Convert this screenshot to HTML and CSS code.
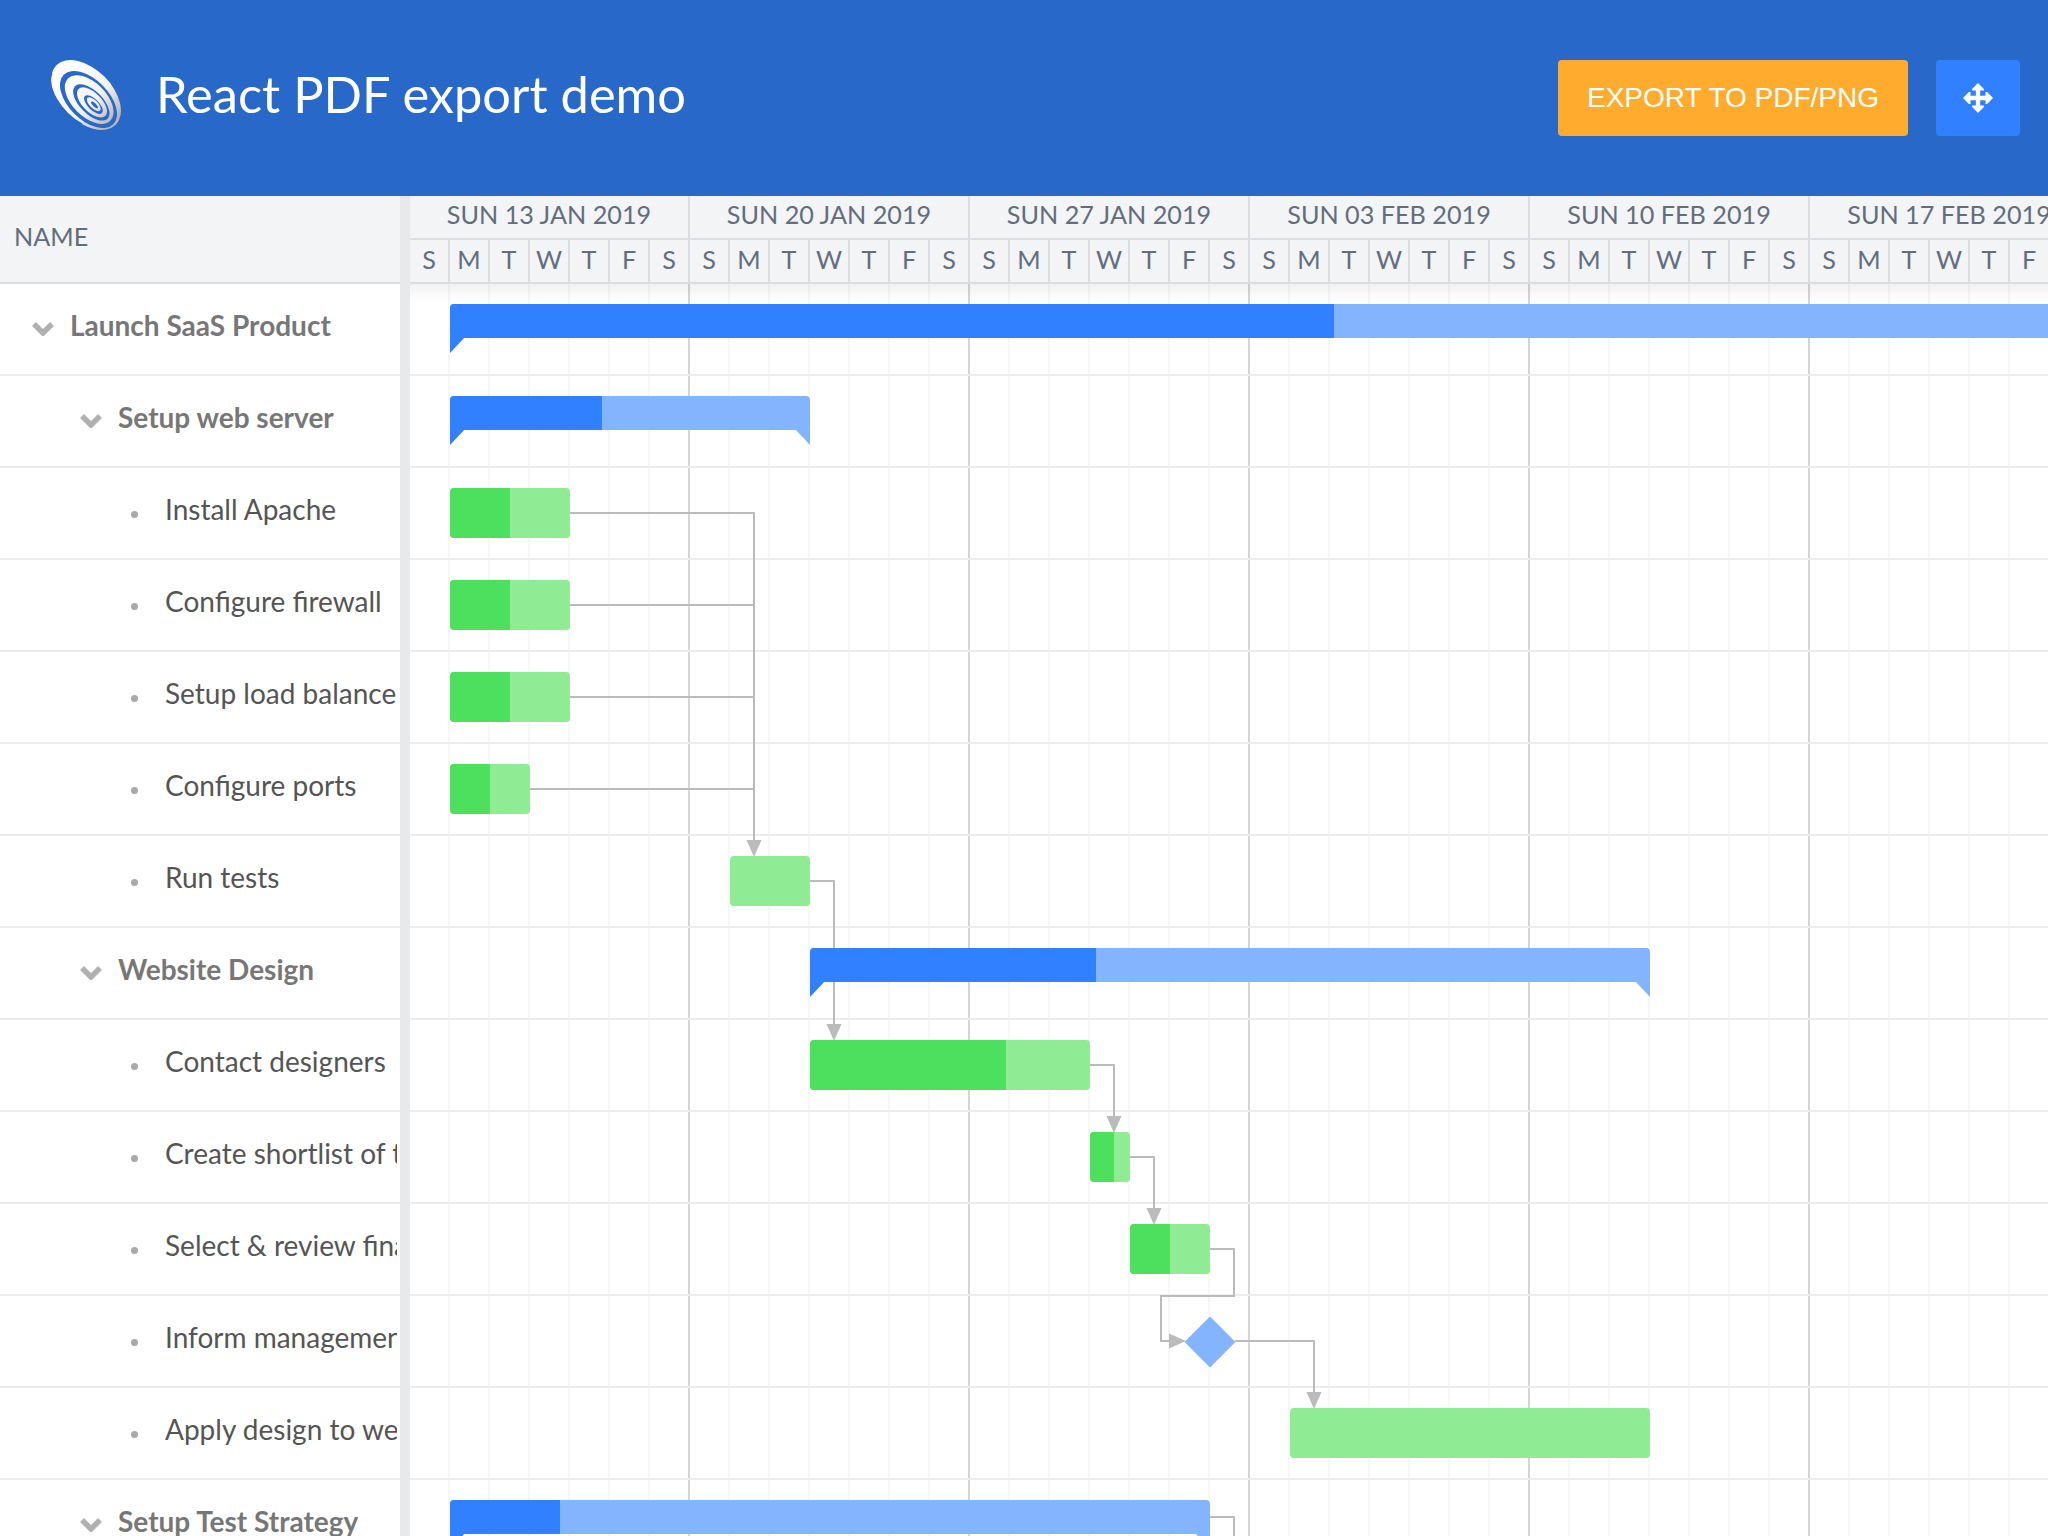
FILE: index.html
```html
<!DOCTYPE html>
<html lang="en">
<head>
    <meta charset="UTF-8">
    <title>React PDF export demo</title>
    <link rel="stylesheet" href="styles.css">
</head>
<body>
    <header class="topbar">
        <svg class="logo" viewBox="-36 -35 72 70">
            <defs>
                <linearGradient id="logoFill" gradientUnits="userSpaceOnUse" x1="-30" y1="0" x2="36" y2="0">
                    <stop offset="0" stop-color="#ffffff"/>
                    <stop offset="0.6" stop-color="#f2f2f2"/>
                    <stop offset="1" stop-color="#b8b8b8"/>
                </linearGradient>
            </defs>
            <g transform="rotate(45)">
                <ellipse cx="0" cy="0" rx="42" ry="26" fill="url(#logoFill)"/>
                <ellipse cx="5" cy="1.5" rx="35" ry="20" fill="#2868c8"/>
                <ellipse cx="5.5" cy="1" rx="30" ry="17" fill="url(#logoFill)"/>
                <ellipse cx="9" cy="1.5" rx="23" ry="11.5" fill="#2868c8"/>
                <ellipse cx="9.5" cy="1" rx="19" ry="9.5" fill="url(#logoFill)"/>
                <ellipse cx="12" cy="1.5" rx="12" ry="5.5" fill="#2868c8"/>
                <ellipse cx="12" cy="1" rx="9" ry="4" fill="url(#logoFill)"/>
                <ellipse cx="13" cy="1" rx="4.5" ry="1.6" fill="#2868c8"/>
                <path d="M-40 9A40 22 0 0 0 18 24" fill="none" stroke="#2868c8" stroke-width="2.5"/>
            </g>
        </svg>
        <h1 class="title">React PDF export demo</h1>
        <button class="export-button">EXPORT TO PDF/PNG</button>
        <button class="move-button">
            <svg viewBox="0 0 28 28" class="move-icon">
                <path d="M14 0l5.5 5.5v1.5h-3.5v5h5v-3.5h1.5l5.5 5.5-5.5 5.5h-1.5v-3.5h-5v5h3.5v1.5l-5.5 5.5-5.5-5.5v-1.5h3.5v-5h-5v3.5h-1.5l-5.5-5.5 5.5-5.5h1.5v3.5h5v-5h-3.5v-1.5z"/>
            </svg>
        </button>
    </header>

    <div class="gantt">
        <div class="names">
            <div class="names-head">NAME</div>
            <div class="name-row level-0"><svg class="chevron" viewBox="0 0 22 14"><path d="M2 2l9 9 9-9"/></svg><span>Launch SaaS Product</span></div>
            <div class="name-row level-1"><svg class="chevron" viewBox="0 0 22 14"><path d="M2 2l9 9 9-9"/></svg><span>Setup web server</span></div>
            <div class="name-row level-2"><i class="dot"></i><span>Install Apache</span></div>
            <div class="name-row level-2"><i class="dot"></i><span>Configure firewall</span></div>
            <div class="name-row level-2"><i class="dot"></i><span>Setup load balancer</span></div>
            <div class="name-row level-2"><i class="dot"></i><span>Configure ports</span></div>
            <div class="name-row level-2"><i class="dot"></i><span>Run tests</span></div>
            <div class="name-row level-1"><svg class="chevron" viewBox="0 0 22 14"><path d="M2 2l9 9 9-9"/></svg><span>Website Design</span></div>
            <div class="name-row level-2"><i class="dot"></i><span>Contact designers</span></div>
            <div class="name-row level-2"><i class="dot"></i><span>Create shortlist of three designers</span></div>
            <div class="name-row level-2"><i class="dot"></i><span>Select &amp; review final design</span></div>
            <div class="name-row level-2"><i class="dot"></i><span>Inform management about decision</span></div>
            <div class="name-row level-2"><i class="dot"></i><span>Apply design to web site</span></div>
            <div class="name-row level-1"><svg class="chevron" viewBox="0 0 22 14"><path d="M2 2l9 9 9-9"/></svg><span>Setup Test Strategy</span></div>
        </div>
        <div class="splitter"></div>
        <div class="timeline">
            <div class="weeks">
                <div class="week">SUN 13 JAN 2019</div>
                <div class="week">SUN 20 JAN 2019</div>
                <div class="week">SUN 27 JAN 2019</div>
                <div class="week">SUN 03 FEB 2019</div>
                <div class="week">SUN 10 FEB 2019</div>
                <div class="week">SUN 17 FEB 2019</div>
            </div>
            <div class="days">
                <div class="day">S</div><div class="day">M</div><div class="day">T</div><div class="day">W</div><div class="day">T</div><div class="day">F</div><div class="day">S</div>
                <div class="day">S</div><div class="day">M</div><div class="day">T</div><div class="day">W</div><div class="day">T</div><div class="day">F</div><div class="day">S</div>
                <div class="day">S</div><div class="day">M</div><div class="day">T</div><div class="day">W</div><div class="day">T</div><div class="day">F</div><div class="day">S</div>
                <div class="day">S</div><div class="day">M</div><div class="day">T</div><div class="day">W</div><div class="day">T</div><div class="day">F</div><div class="day">S</div>
                <div class="day">S</div><div class="day">M</div><div class="day">T</div><div class="day">W</div><div class="day">T</div><div class="day">F</div><div class="day">S</div>
                <div class="day">S</div><div class="day">M</div><div class="day">T</div><div class="day">W</div><div class="day">T</div><div class="day">F</div><div class="day">S</div>
            </div>
            <div class="chart">
                <div class="chart-row"><div class="summary open-end" style="left:40px;width:1700px"><div class="summary-done" style="width:884px"></div></div></div>
                <div class="chart-row"><div class="summary" style="left:40px;width:360px"><div class="summary-done" style="width:152px"></div></div></div>
                <div class="chart-row"><div class="task" style="left:40px;width:120px"><div class="task-done" style="width:60px"></div></div></div>
                <div class="chart-row"><div class="task" style="left:40px;width:120px"><div class="task-done" style="width:60px"></div></div></div>
                <div class="chart-row"><div class="task" style="left:40px;width:120px"><div class="task-done" style="width:60px"></div></div></div>
                <div class="chart-row"><div class="task" style="left:40px;width:80px"><div class="task-done" style="width:40px"></div></div></div>
                <div class="chart-row"><div class="task" style="left:320px;width:80px"></div></div>
                <div class="chart-row"><div class="summary" style="left:400px;width:840px"><div class="summary-done" style="width:286px"></div></div></div>
                <div class="chart-row"><div class="task" style="left:400px;width:280px"><div class="task-done" style="width:196px"></div></div></div>
                <div class="chart-row"><div class="task" style="left:680px;width:40px"><div class="task-done" style="width:24px"></div></div></div>
                <div class="chart-row"><div class="task" style="left:720px;width:80px"><div class="task-done" style="width:40px"></div></div></div>
                <div class="chart-row"><div class="milestone" style="left:782px"></div></div>
                <div class="chart-row"><div class="task" style="left:880px;width:360px"></div></div>
                <div class="chart-row"><div class="summary" style="left:40px;width:760px"><div class="summary-done" style="width:110px"></div></div></div>

                <!-- dependency lines, coordinates are relative to the chart -->
                <svg class="links" width="1638" height="1252">
                    <path d="M160 229H344V556M160 321H344M160 413H344M120 505H344"/>
                    <path d="M400 597H424V664M424 698V740"/>
                    <path d="M680 781H704V832"/>
                    <path d="M720 873H744V924"/>
                    <path d="M800 965H824V1012H751V1057H759"/>
                    <path d="M825 1057H904V1108"/>
                    <path d="M800 1233H824V1252"/>
                    <polygon points="336.5,556 351.5,556 344,573"/>
                    <polygon points="416.5,740 431.5,740 424,757"/>
                    <polygon points="696.5,832 711.5,832 704,849"/>
                    <polygon points="736.5,924 751.5,924 744,941"/>
                    <polygon points="759,1049.5 759,1064.5 776,1057"/>
                    <polygon points="896.5,1108 911.5,1108 904,1125"/>
                </svg>
            </div>
        </div>
    </div>
</body>
</html>
```

FILE: styles.css
```css
html, body {
    margin: 0;
    height: 100%;
    overflow: hidden;
}
body {
    font-family: Lato, sans-serif;
    background: #fff;
}
.topbar {
    height: 196px;
    background: #2868c8;
    display: flex;
    align-items: center;
    padding: 0 28px 0 50px;
    box-sizing: border-box;
}
.logo {
    width: 72px;
    height: 70px;
    margin-right: 34px;
    margin-bottom: 6px;
}
.title {
    flex: 1;
    margin: 0 0 10px;
    font-size: 50.6px;
    font-weight: 400;
    color: #fff;
}
.export-button {
    width: 350px;
    height: 76px;
    border: none;
    border-radius: 4px;
    background: #ffab2e;
    color: #fff;
    font-family: "Liberation Sans", sans-serif;
    font-size: 28px;
}
.move-button {
    width: 84px;
    height: 76px;
    margin-left: 28px;
    padding: 0;
    border: none;
    border-radius: 4px;
    background: #3080ff;
    display: flex;
    align-items: center;
    justify-content: center;
}
.move-icon {
    width: 30px;
    height: 30px;
    fill: #fff;
}
.gantt {
    display: flex;
}
.names {
    width: 400px;
    flex: none;
    overflow: hidden;
}
.names-head {
    height: 88px;
    box-sizing: border-box;
    border-bottom: 2px solid #dcdde0;
    background: #f3f4f6;
    color: #626e7d;
    font-size: 25.2px;
    line-height: 81px;
    padding-left: 14px;
}
.name-row {
    height: 92px;
    box-sizing: border-box;
    border-bottom: 2px solid #ececec;
    display: flex;
    align-items: center;
    white-space: nowrap;
    font-size: 28px;
    color: #555;
    padding-right: 3px;
}
.name-row span {
    margin-bottom: 8px;
    min-width: 0;
    overflow: hidden;
    line-height: 44px;
}
.level-0 {
    padding-left: 32px;
}
.level-1 {
    padding-left: 80px;
}
.level-2 {
    padding-left: 131px;
}
.level-0, .level-1 {
    font-weight: 700;
    color: #777;
}
.chevron {
    width: 22px;
    height: 14px;
    flex: none;
    margin-right: 16px;
    fill: none;
    stroke: #b0b0b0;
    stroke-width: 5.5;
}
.dot {
    width: 7px;
    height: 7px;
    flex: none;
    border-radius: 50%;
    background: #aaa;
    margin-top: 2px;
    margin-right: 27px;
}
.splitter {
    width: 10px;
    flex: none;
    background: #e8e9eb;
}
.timeline {
    flex: 1;
    min-width: 0;
    overflow: hidden;
}
.weeks, .days {
    display: flex;
    background: #f3f4f6;
    color: #626e7d;
    font-size: 25.2px;
    text-align: center;
}
.weeks {
    height: 44px;
    box-sizing: border-box;
    border-bottom: 2px solid #dcdde0;
}
.week {
    flex: none;
    width: 280px;
    box-sizing: border-box;
    border-right: 2px solid #dcdde0;
    line-height: 37px;
    white-space: nowrap;
}
.days {
    height: 44px;
    box-sizing: border-box;
    border-bottom: 2px solid #dcdde0;
}
.day {
    flex: none;
    width: 40px;
    box-sizing: border-box;
    border-right: 2px solid #dcdde0;
    line-height: 38px;
}
.chart {
    position: relative;
    background:
        repeating-linear-gradient(to right, transparent 0, transparent 278px, #d3d5d8 278px, #d3d5d8 280px),
        repeating-linear-gradient(to right, transparent 0, transparent 38px, #f6f6f7 38px, #f6f6f7 40px);
}
.chart::before {
    content: "";
    position: absolute;
    top: 0;
    left: 0;
    right: 0;
    height: 18px;
    background: linear-gradient(rgba(0, 0, 0, 0.05), transparent);
}
.chart-row {
    position: relative;
    height: 92px;
    box-sizing: border-box;
    border-bottom: 2px solid #ececec;
}
.task, .summary {
    position: absolute;
    top: 20px;
    border-radius: 4px;
}
.task {
    height: 50px;
    background: #8fec95;
    overflow: hidden;
}
.task-done {
    height: 100%;
    background: #4ddf5e;
}
.summary {
    height: 34px;
    background: #85b4ff;
}
.summary-done {
    height: 100%;
    background: #3080ff;
    border-radius: 4px 0 0 4px;
}
.summary::before, .summary::after {
    content: "";
    position: absolute;
    top: 32px;
    border-style: solid;
}
.summary::before {
    left: 0;
    border-width: 17px 16px 0 0;
    border-color: #3080ff transparent transparent transparent;
}
.summary::after {
    right: 0;
    border-width: 17px 0 0 16px;
    border-color: #85b4ff transparent transparent transparent;
}
.open-end::after {
    display: none;
}
.milestone {
    position: absolute;
    top: 28px;
    width: 36px;
    height: 36px;
    background: #85b4ff;
    transform: rotate(45deg);
}
.links {
    position: absolute;
    top: 0;
    left: 0;
    z-index: 2;
}
.links path {
    fill: none;
    stroke: #bbb;
    stroke-width: 2;
}
.links polygon {
    fill: #bbb;
}
```
